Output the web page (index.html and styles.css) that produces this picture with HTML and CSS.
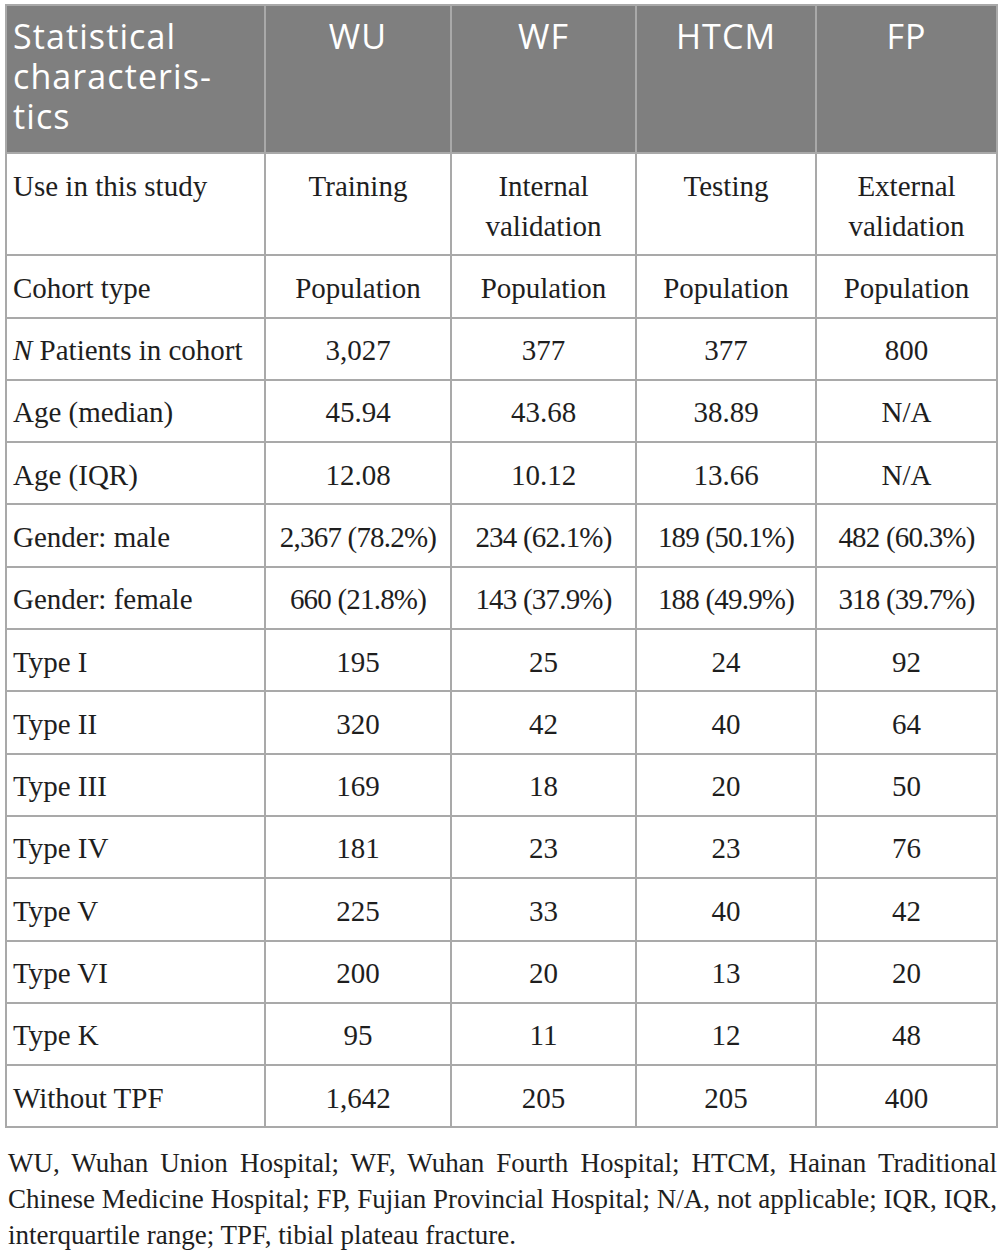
FILE: index.html
```html
<!DOCTYPE html>
<html>
<head>
  <meta charset="utf-8">
  <title>Cohort characteristics</title>
  <link rel="stylesheet" href="styles.css">
</head>
<body>
  <div class="page">
    <table class="stats">
      <colgroup>
        <col class="c-label">
        <col class="c-wu">
        <col class="c-wf">
        <col class="c-htcm">
        <col class="c-fp">
      </colgroup>
      <thead>
        <tr>
          <th class="label">Statistical characteris-<br>tics</th>
          <th>WU</th>
          <th>WF</th>
          <th>HTCM</th>
          <th>FP</th>
        </tr>
      </thead>
      <tbody>
        <tr>
          <td class="label">Use in this study</td>
          <td>Training</td>
          <td>Internal validation</td>
          <td>Testing</td>
          <td>External validation</td>
        </tr>
        <tr>
          <td class="label">Cohort type</td>
          <td>Population</td>
          <td>Population</td>
          <td>Population</td>
          <td>Population</td>
        </tr>
        <tr>
          <td class="label"><i>N</i> Patients in cohort</td>
          <td>3,027</td>
          <td>377</td>
          <td>377</td>
          <td>800</td>
        </tr>
        <tr>
          <td class="label">Age (median)</td>
          <td>45.94</td>
          <td>43.68</td>
          <td>38.89</td>
          <td>N/A</td>
        </tr>
        <tr>
          <td class="label">Age (IQR)</td>
          <td>12.08</td>
          <td>10.12</td>
          <td>13.66</td>
          <td>N/A</td>
        </tr>
        <tr class="pct">
          <td class="label">Gender: male</td>
          <td>2,367 (78.2%)</td>
          <td>234 (62.1%)</td>
          <td>189 (50.1%)</td>
          <td>482 (60.3%)</td>
        </tr>
        <tr class="pct">
          <td class="label">Gender: female</td>
          <td>660 (21.8%)</td>
          <td>143 (37.9%)</td>
          <td>188 (49.9%)</td>
          <td>318 (39.7%)</td>
        </tr>
        <tr>
          <td class="label">Type I</td>
          <td>195</td>
          <td>25</td>
          <td>24</td>
          <td>92</td>
        </tr>
        <tr>
          <td class="label">Type II</td>
          <td>320</td>
          <td>42</td>
          <td>40</td>
          <td>64</td>
        </tr>
        <tr>
          <td class="label">Type III</td>
          <td>169</td>
          <td>18</td>
          <td>20</td>
          <td>50</td>
        </tr>
        <tr>
          <td class="label">Type IV</td>
          <td>181</td>
          <td>23</td>
          <td>23</td>
          <td>76</td>
        </tr>
        <tr>
          <td class="label">Type V</td>
          <td>225</td>
          <td>33</td>
          <td>40</td>
          <td>42</td>
        </tr>
        <tr>
          <td class="label">Type VI</td>
          <td>200</td>
          <td>20</td>
          <td>13</td>
          <td>20</td>
        </tr>
        <tr>
          <td class="label">Type K</td>
          <td>95</td>
          <td>11</td>
          <td>12</td>
          <td>48</td>
        </tr>
        <tr>
          <td class="label">Without TPF</td>
          <td>1,642</td>
          <td>205</td>
          <td>205</td>
          <td>400</td>
        </tr>
      </tbody>
    </table>

    <p class="note">
      <span class="line">WU, Wuhan Union Hospital; WF, Wuhan Fourth Hospital; HTCM, Hainan Traditional</span>
      <span class="line">Chinese Medicine Hospital; FP, Fujian Provincial Hospital; N/A, not applicable; IQR, IQR,</span>
      <span class="line last">interquartile range; TPF, tibial plateau fracture.</span>
    </p>
  </div>
</body>
</html>
```

FILE: styles.css
```css
body {
  margin: 0;
  background: #ffffff;
  color: #1e1e1e;
  font-family: "Liberation Serif", "Times New Roman", serif;
}

.page {
  padding: 4px 7px 0 5px;
}

.stats {
  width: 991px;
  border-collapse: collapse;
  table-layout: fixed;
}

.c-label { width: 259px; }
.c-wu { width: 186px; }
.c-wf { width: 185px; }
.c-htcm { width: 180px; }
.c-fp { width: 181px; }

.stats th,
.stats td {
  border: 2px solid #a9a9a9;
  vertical-align: top;
  text-align: center;
}

.stats th {
  background: #7f7f7f;
  color: #fff;
  font: 400 34px/40px "Open Sans", "Noto Sans", sans-serif;
  letter-spacing: 1.1px;
  padding: 10px 6px 16px 6px;
}

.stats td {
  font-size: 29px;
  line-height: 40px;
  padding: 11.5px 6px 8.8px 6px;
}

.stats .pct td {
  letter-spacing: -0.8px;
}

.stats .pct .label {
  letter-spacing: 0;
}

.stats .label {
  text-align: left;
}

.note {
  margin: 17px 0 0 3px;
  font-size: 27px;
  line-height: 36px;
}

.note .line {
  display: block;
  text-align: justify;
  text-align-last: justify;
}

.note .last {
  text-align-last: left;
}
```
